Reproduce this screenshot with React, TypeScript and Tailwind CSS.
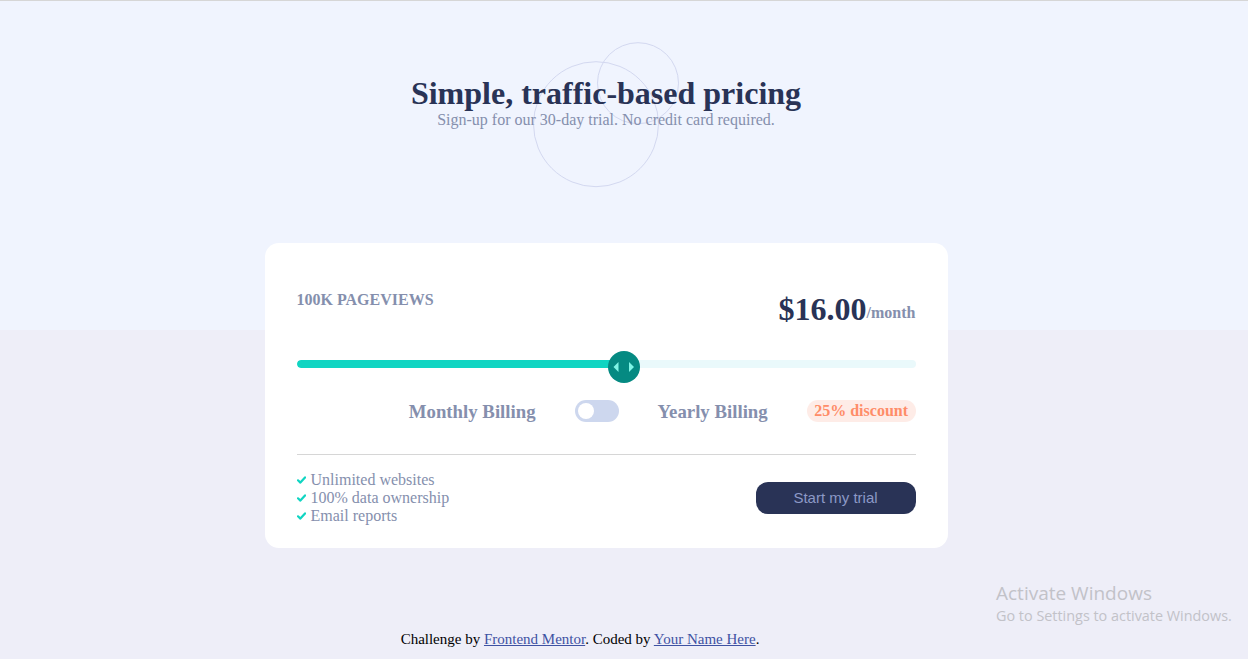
import { useState } from 'react'

const features = ['Unlimited websites', '100% data ownership', 'Email reports']

function Check() {
  return (
    <svg width="9" height="8" viewBox="0 0 9 8" className="mr-[5px] mt-[5px] shrink-0">
      <path d="M1 4.3 L3.4 6.6 L8 1.4" fill="none" stroke="#10d5c2" strokeWidth="2.2" strokeLinecap="round" strokeLinejoin="round" />
    </svg>
  )
}

export default function App() {
  const [yearly, setYearly] = useState(false)

  return (
    <div className="relative min-h-[659px] w-full overflow-hidden border-t border-[#d6d6d6] bg-[linear-gradient(to_bottom,#f0f4fe_329px,#eeeef8_329px)] font-['Liberation_Serif',serif]">
      <div className="w-[1212px]">
        <header className="relative pt-[74px] text-center">
          {/* background rings */}
          <svg className="absolute left-[530px] top-[37px]" width="155" height="155" viewBox="0 0 155 155">
            <circle cx="66" cy="86.2" r="62.5" fill="none" stroke="#d3d8f0" strokeWidth="1" />
            <circle cx="108" cy="45.2" r="40.5" fill="none" stroke="#d3d8f0" strokeWidth="1" />
          </svg>
          <h1 className="relative text-[32px] font-bold leading-[36px] text-[#293356]">
            Simple, traffic-based pricing
          </h1>
          <p className="relative text-base leading-[18px] text-[#858fad]">
            Sign-up for our 30-day trial. No credit card required.
          </p>
        </header>

        <main className="mx-auto mt-[114px] w-[683px] rounded-[14px] bg-white px-8 pb-[23px] pt-12">
          <div className="flex items-start justify-between">
            <span className="text-base font-bold leading-[18px] text-[#858fad]">100K PAGEVIEWS</span>
            <div className="flex items-baseline">
              <span className="text-[32px] font-bold leading-[37px] text-[#293356]">$16.00</span>
              <span className="relative bottom-[2px] text-base font-bold text-[#858fad]">/month</span>
            </div>
          </div>

          <div className="relative mt-5 flex h-8 items-center">
            <div className="flex h-2 w-full overflow-hidden rounded-full bg-[#eaf9fb]">
              <div className="h-full w-[327px] rounded-l-full bg-[#10d5c2]" />
            </div>
            <div className="absolute left-[311px] top-[3px] flex h-8 w-8 items-center justify-center rounded-full bg-[#058a82]">
              <svg width="32" height="32" viewBox="0 0 32 32">
                <polygon points="10.5,11 5.5,16 10.5,21" fill="#80f5e6" />
                <polygon points="21,11 26,16 21,21" fill="#80f5e6" />
              </svg>
            </div>
          </div>

          <div className="mt-5 flex h-[22px] items-center justify-end gap-[39px] text-[18.8px] font-bold text-[#858fad]">
            <span className="relative top-px">Monthly Billing</span>
            <button
              onClick={() => setYearly(!yearly)}
              className="relative h-[22px] w-[44px] rounded-full bg-[#cdd7ee]"
            >
              <span className={`absolute top-[3px] h-4 w-4 rounded-full bg-white ${yearly ? 'left-[25px]' : 'left-[3px]'}`} />
            </button>
            <span className="relative top-px">Yearly Billing</span>
            <span className="rounded-full bg-[#feece7] px-[7.5px] text-base leading-[22px] text-[#ff8d68]">25% discount</span>
          </div>

          <div className="mt-8 h-px w-full bg-[#d6d6d6]" />

          <div className="mt-4 flex items-center justify-between">
            <ul className="text-base leading-[18px] text-[#858fad]">
              {features.map((f) => (
                <li key={f} className="flex items-start">
                  <Check />
                  {f}
                </li>
              ))}
            </ul>
            <button className="h-8 w-[160px] rounded-[12px] bg-[#293356] font-['Liberation_Sans',sans-serif] text-[15px] text-[#8c99c6]">
              Start my trial
            </button>
          </div>
        </main>

        <footer className="mt-[83px] w-[1160px] text-center text-[15px] leading-[17px] text-black">
          Challenge by{' '}
          <a href="#" className="text-[#3e52a3] underline">Frontend Mentor</a>. Coded by{' '}
          <a href="#" className="text-[#3e52a3] underline">Your Name Here</a>.
        </footer>
      </div>

      <div className="absolute left-[996px] top-[580px] font-['Open_Sans',sans-serif] text-[#c2c2c8]">
        <div className="text-[19px] leading-[24px]">Activate Windows</div>
        <div className="text-[14.4px] leading-[21px]">Go to Settings to activate Windows.</div>
      </div>
    </div>
  )
}
